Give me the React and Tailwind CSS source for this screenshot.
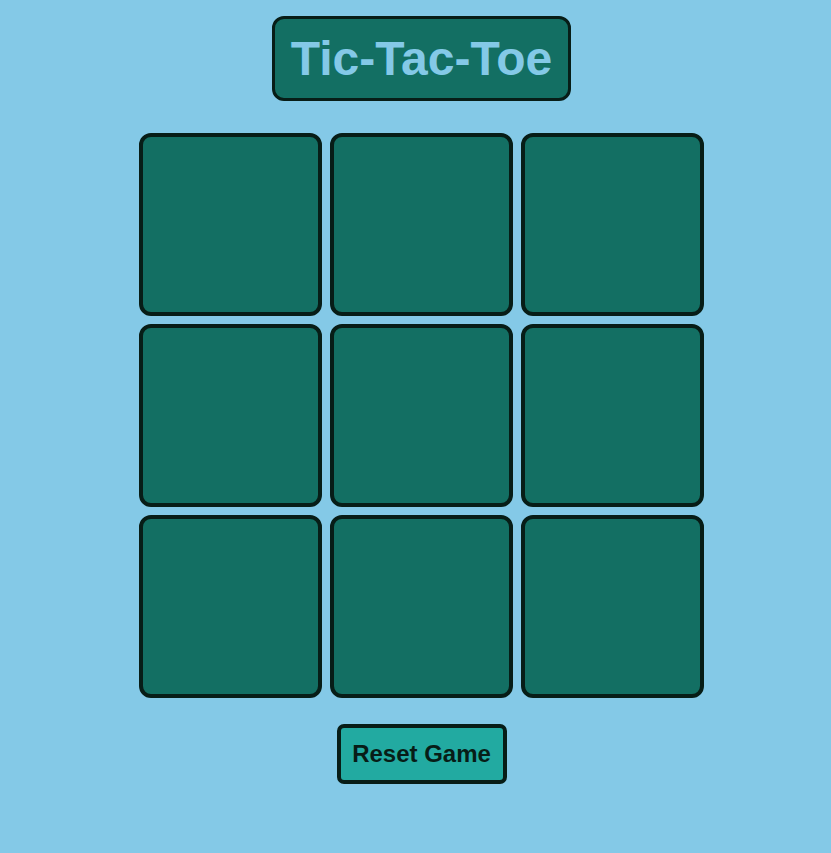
import React, { useState } from 'react'

const App = () => {
  const [board, setBoard] = useState(Array(9).fill(null))
  const [xNext, setXNext] = useState(true)

  const styles = {
    page: `min-h-screen w-full bg-[#84c9e7] flex flex-col items-center pl-[12px] pt-[16px] font-['Liberation_Sans',Arial,sans-serif]`,
    title: `bg-[#136f63] border-[3px] border-[#071d17] rounded-[12px] px-[16px] py-[13px] text-[48px] leading-[53px] font-bold text-[#84c9e7]`,
    grid: `mt-[32px] grid grid-cols-[repeat(3,183px)] grid-rows-[repeat(3,183px)] gap-[8px]`,
    cell: `bg-[#136f63] border-[4px] border-[#071d17] rounded-[12px] flex items-center justify-center text-[96px] font-bold text-[#84c9e7]`,
    reset: `mt-[26px] w-[170px] h-[60px] bg-[#22aaa1] border-[4px] border-[#071d17] rounded-[7px] text-[24px] font-bold text-[#071d17]`,
  }

  const play = (i) => {
    if (board[i]) return
    const next = [...board]
    next[i] = xNext ? 'X' : 'O'
    setBoard(next)
    setXNext(!xNext)
  }

  const reset = () => {
    setBoard(Array(9).fill(null))
    setXNext(true)
  }

  return (
    <div className={styles.page}>
      <h1 className={styles.title}>Tic-Tac-Toe</h1>
      <div className={styles.grid}>
        {board.map((v, i) => (
          <button key={i} className={styles.cell} onClick={() => play(i)}>
            {v}
          </button>
        ))}
      </div>
      <button className={styles.reset} onClick={reset}>
        Reset Game
      </button>
    </div>
  )
}

export default App
